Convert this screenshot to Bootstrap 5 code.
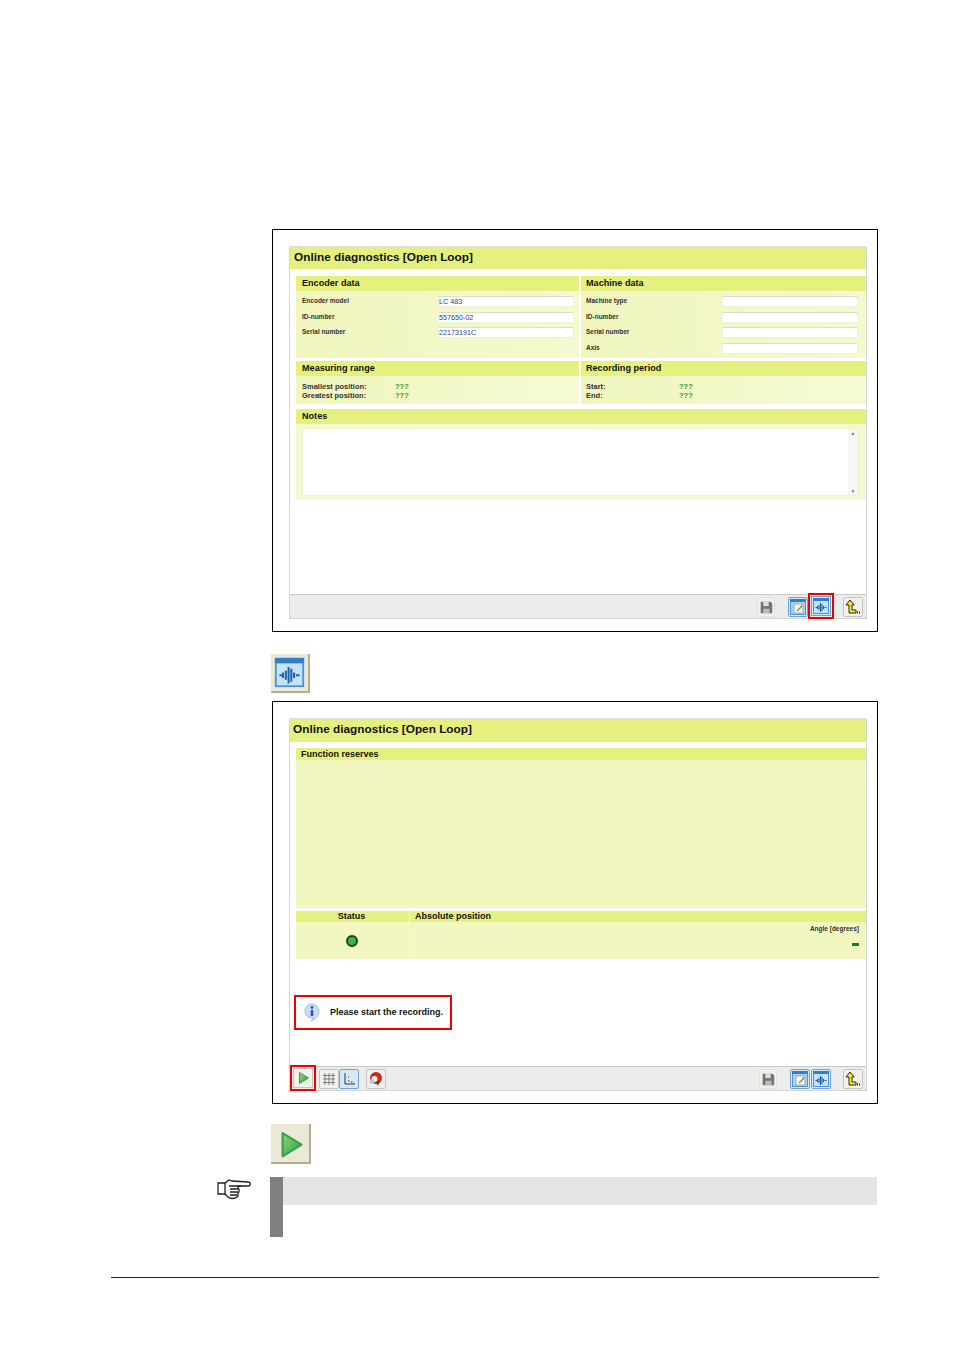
<!DOCTYPE html>
<html lang="en">
<head>
  <meta charset="UTF-8">
  <meta name="viewport" content="width=device-width, initial-scale=1.0">
  <title>Online diagnostics</title>
  <link href="https://cdn.jsdelivr.net/npm/bootstrap@5.3.3/dist/css/bootstrap.min.css" rel="stylesheet">
  <style>
    body { background: #fff; font-family: "Liberation Sans", Arial, sans-serif; color: #111; }
    .svg-defs { position: absolute; width: 0; height: 0; }
    .manual-page { width: 954px; height: 1350px; padding-top: 229px; overflow: hidden; }
    .shot-frame { width: 606px; height: 403px; margin-left: 272px; border: 1px solid #000; padding: 16px 10px 12px 16px; }
    .shot-frame-2 { margin-top: 8px; }
    .shot-window { height: 100%; border: 1px solid #d4d4d4; border-top-color: #dcdcdc; background: #fff; }
    .shot-title { height: 22px; margin: 0 0 7px; padding-left: 4px; background: #e5f07f; font-size: 11.8px; font-weight: 700; line-height: 21px; }
    .shot-frame-2 .shot-title { padding-left: 3px; margin-bottom: 6px; height: 23px; }
    .shot-sections { padding: 0 0 0 6px; }
    .sec-head { background: #e5f07f; font-size: 9.1px; font-weight: 700; padding-left: 6px; line-height: 15px; height: 15px; }
    .sec-body { background: #f1f7bf; }
    .col-left { width: 283px; margin-right: 2px; }
    .col-right { width: 285px; }
    .col-right .sec-head, .col-right .field-row, .col-right .range-row { padding-left: 5px; }
    .body-fields { height: 67px; padding-top: 2px; background: linear-gradient(90deg, #f0f6bd, #f4f9cf); }
    .body-range { height: 28px; padding-top: 6px; background: linear-gradient(90deg, #f0f6bd, #f5fad4); }
    .body-notes { height: 76px; padding: 4px 7px 0 6px; background: #f5f9d2; }
    .gap-range { margin-top: 3px; }
    .gap-notes { margin-top: 5px; }
    .field-row { height: 15.7px; font-size: 6.5px; font-weight: 700; color: #333; padding-left: 6px; line-height: 16px; }
    .field-name { width: 136px; }
    .field-box { width: 136px; height: 11px; margin-top: 3px; background: #fff; border: 1px solid #eef0e0; border-top-color: #dcdcd0; font-size: 7.2px; font-weight: 400; line-height: 9px; color: #2a3f8f; }
    .range-row { font-size: 7.5px; font-weight: 700; line-height: 9px; color: #333; padding-left: 6px; }
    .range-row .field-name { width: 93px; }
    .range-val { color: #2a9a2a; }
    .notes-box { height: 68px; background: #fff; border: 1px solid #eef2c8; position: relative; }
    .scroll-track { position: absolute; right: 0; top: 0; bottom: 0; width: 10px; background: #f6f6f6; color: #777; font-size: 5px; line-height: 8px; text-align: center; }
    .shot-toolbar { height: 24px; border-top: 1px solid #c8c8c8; background: #ececea; padding: 2px 3px 0 3px; }
    .tool-btn { width: 20px; height: 20px; border: 1px solid #c4c4c4; border-radius: 2px; background: #f2f0ea; position: relative; display: block; }
    .tool-btn svg { display: block; width: 18px; height: 18px; }
    .tool-btn.is-blue { background: #d4e8f8; border-color: #6fa3cc; }
    .tool-save { width: 18px; border-color: #e0e0e0; margin-right: 13px; }
    .tool-save svg { width: 16px; }
    .gap-3px { margin-right: 3px; }
    .gap-1px { margin-right: 1px; }
    .gap-6px { margin-right: 6px; }
    .gap-7px { margin-right: 7px; }
    .gap-12px { margin-right: 12px; }
    .red-mark { outline: 2px solid #ee0000; outline-offset: 1px; border-radius: 0; margin-top: -1px; z-index: 1; }
    .big-icon { display: block; margin-left: 271px; border-right: 2px solid #b5ad93; border-bottom: 2px solid #b5ad93; background: #ece8d8; }
    .big-icon-wave { margin-top: 22px; }
    .big-icon-play { margin-top: 20px; }
    .head-reserves { height: 12px; line-height: 12px; font-size: 9px; padding-left: 5px; }
    .body-reserves { height: 148px; }
    .gap-status { margin-top: 3px; }
    .col-status { width: 113px; margin-right: 1px; }
    .col-position { width: 456px; }
    .head-status { height: 11px; line-height: 11px; padding: 0 2px 0 0; font-size: 9px; }
    .head-position { height: 11px; line-height: 11px; font-size: 9px; padding-left: 5px; }
    .body-status { height: 37px; margin-right: -1px; padding: 13px 2px 0 0; border-right: 1px solid #f6fad6; }
    .body-position { height: 37px; padding: 2px 7px 0 0; font-size: 6.5px; font-weight: 700; line-height: 9px; color: #333; }
    .msg-box { width: 158px; height: 35px; margin: 36px 0 0 -2px; border: 2px solid #ee0000; font-size: 9px; font-weight: 700; padding-left: 7px; gap: 9px; }
    .status-led { width: 12px; height: 12px; border-radius: 50%; background: #45b045; border: 2.5px solid #0e4a20; }
    .angle-dash { width: 7px; height: 3px; background: #157a2a; margin: 10px 0 0 auto; }
    .note-row { height: 60px; margin-top: 13px; }
    .hand-icon { width: 34px; height: 24px; margin: 1px 19px 0 217px; }
    .note-bar { width: 13px; background: #808080; }
    .note-head { width: 594px; height: 28px; background: #e4e4e4; }
    .foot-rule { width: 768px; height: 1px; margin: 40px 0 0 111px; background: #222; }
  </style>
</head>
<body>
  <svg class="svg-defs">
    <defs>
      <linearGradient id="green-fill" x1="0" y1="0" x2="1" y2="1">
        <stop offset="0" stop-color="#8bd97a"/>
        <stop offset="1" stop-color="#2e9e3e"/>
      </linearGradient>
    </defs>
    <symbol id="ic-save" viewBox="0 0 18 18">
      <path d="M3 3h11l2 2v11H3z" fill="#747474"/>
      <rect x="6" y="3" width="6" height="5" fill="#dedede"/>
      <rect x="6" y="11" width="7" height="5" fill="#bdbdbd"/>
    </symbol>
    <symbol id="ic-notes" viewBox="0 0 18 18">
      <rect x="1.500" y="1.500" width="15" height="15" fill="#a9d3f2" stroke="#4a94d4"/>
      <rect x="1" y="1" width="16" height="3" fill="#2f80c8"/>
      <rect x="5" y="6" width="9" height="9" fill="#f6f6ee" stroke="#888" stroke-width=".6"/>
      <path d="M8 13l4-4" stroke="#6aa84f" stroke-width="1.400"/>
      <path d="M12 9l1-1.500" stroke="#d04040" stroke-width="1.400"/>
    </symbol>
    <symbol id="ic-wave" viewBox="0 0 18 18">
      <rect x="1.500" y="1.500" width="15" height="15" fill="#c4e2f8" stroke="#4a94d4"/>
      <rect x="1" y="1" width="16" height="3" fill="#2f80c8"/>
      <path d="M3.500 10.500h2M5.500 9v3M7 8v5M8.500 6v9M10 7v7M11.500 9v3M12.500 10.500h2" fill="none" stroke="#1a62b0" stroke-width="1.100"/>
    </symbol>
    <symbol id="ic-back" viewBox="0 0 18 18">
      <path d="M6 2l4 5H8v5h4v3H5V7H2z" fill="#f4ee20" stroke="#222" stroke-width="1"/>
      <path d="M13 14.500h1M15 14.500h1" stroke="#222" stroke-width="1.800"/>
    </symbol>
    <symbol id="ic-play" viewBox="0 0 18 18">
      <path d="M5.500 3.500l9 5.500-9 5.500z" fill="url(#green-fill)" stroke="#3a9c50" stroke-width="1" stroke-linejoin="round"/>
    </symbol>
    <symbol id="ic-grid" viewBox="0 0 18 18">
      <path d="M5 3v12M9 3v12M13 3v12M3 5.500h12M3 9h12M3 12.500h12" stroke="#666" stroke-width=".8"/>
    </symbol>
    <symbol id="ic-axis" viewBox="0 0 18 18">
      <path d="M5 3v11h10" fill="none" stroke="#333" stroke-width="1"/>
      <path d="M8 11h1.500M11 12h1.500M8 7h1" stroke="#333" stroke-width="1"/>
    </symbol>
    <symbol id="ic-magnet" viewBox="0 0 18 18">
      <circle cx="9" cy="8" r="6" fill="#d42818"/>
      <circle cx="7.500" cy="9" r="3" fill="#f4f0e8"/>
      <path d="M9 12l2 4 2-6z" fill="#7a2a18"/>
      <circle cx="5" cy="11.500" r="2.500" fill="#a8d0ea"/>
    </symbol>
  </svg>

  <div class="manual-page">
    <!-- first screenshot: overview tab -->
    <div class="shot-frame">
      <div class="shot-window d-flex flex-column">
        <div class="shot-title">Online diagnostics [Open Loop]</div>
        <div class="shot-sections flex-grow-1">
          <div class="d-flex">
            <div class="col-left">
              <div class="sec-head">Encoder data</div>
              <div class="body-fields">
                <div class="field-row d-flex"><div class="field-name">Encoder model</div><div class="field-box">LC 483</div></div>
                <div class="field-row d-flex"><div class="field-name">ID-number</div><div class="field-box">557650-02</div></div>
                <div class="field-row d-flex"><div class="field-name">Serial number</div><div class="field-box">22173191C</div></div>
              </div>
            </div>
            <div class="col-right">
              <div class="sec-head">Machine data</div>
              <div class="body-fields">
                <div class="field-row d-flex"><div class="field-name">Machine type</div><div class="field-box"></div></div>
                <div class="field-row d-flex"><div class="field-name">ID-number</div><div class="field-box"></div></div>
                <div class="field-row d-flex"><div class="field-name">Serial number</div><div class="field-box"></div></div>
                <div class="field-row d-flex"><div class="field-name">Axis</div><div class="field-box"></div></div>
              </div>
            </div>
          </div>
          <div class="d-flex gap-range">
            <div class="col-left">
              <div class="sec-head">Measuring range</div>
              <div class="body-range">
                <div class="range-row d-flex"><div class="field-name">Smallest position:</div><div class="range-val">???</div></div>
                <div class="range-row d-flex"><div class="field-name">Greatest position:</div><div class="range-val">???</div></div>
              </div>
            </div>
            <div class="col-right">
              <div class="sec-head">Recording period</div>
              <div class="body-range">
                <div class="range-row d-flex"><div class="field-name">Start:</div><div class="range-val">???</div></div>
                <div class="range-row d-flex"><div class="field-name">End:</div><div class="range-val">???</div></div>
              </div>
            </div>
          </div>
          <div class="gap-notes">
            <div class="sec-head">Notes</div>
            <div class="body-notes">
              <div class="notes-box"><div class="scroll-track d-flex flex-column justify-content-between"><span>▲</span><span>▼</span></div></div>
            </div>
          </div>
        </div>
        <div class="shot-toolbar d-flex justify-content-end">
          <div class="tool-btn tool-save"><svg><use href="#ic-save"/></svg></div>
          <div class="tool-btn is-blue gap-3px"><svg><use href="#ic-notes"/></svg></div>
          <div class="tool-btn is-blue red-mark gap-12px"><svg><use href="#ic-wave"/></svg></div>
          <div class="tool-btn"><svg><use href="#ic-back"/></svg></div>
        </div>
      </div>
    </div>

    <svg class="big-icon big-icon-wave" width="39" height="39" viewBox="0 0 18 18"><use href="#ic-wave" x="1" y="1" width="16" height="16"/></svg>

    <!-- second screenshot: function reserves tab -->
    <div class="shot-frame shot-frame-2">
      <div class="shot-window d-flex flex-column">
        <div class="shot-title">Online diagnostics [Open Loop]</div>
        <div class="shot-sections flex-grow-1">
          <div class="sec-head head-reserves">Function reserves</div>
          <div class="sec-body body-reserves"></div>
          <div class="d-flex gap-status">
            <div class="col-status">
              <div class="sec-head head-status text-center">Status</div>
              <div class="sec-body body-status d-flex justify-content-center"><div class="status-led"></div></div>
            </div>
            <div class="col-position">
              <div class="sec-head head-position">Absolute position</div>
              <div class="sec-body body-position text-end">Angle [degrees]<div class="angle-dash"></div></div>
            </div>
          </div>
          <div class="msg-box d-flex align-items-center">
            <svg width="18" height="19" viewBox="0 0 18 19"><path d="M8 1a7.500 7.500 0 0 1 8 7.500c0 4-3 7.500-8 9.500 2-1.500 2.500-2.500 2-3A7 7 0 0 1 8 1z" fill="#c9def5" stroke="#8fb0dc" stroke-width=".8"/><circle cx="9" cy="4.500" r="1.400" fill="#2f4fb0"/><rect x="7.700" y="7" width="2.600" height="6" fill="#2f4fb0"/></svg>
            <span>Please start the recording.</span>
          </div>
        </div>
        <div class="shot-toolbar d-flex">
          <div class="tool-btn red-mark gap-6px"><svg><use href="#ic-play"/></svg></div>
          <div class="tool-btn"><svg><use href="#ic-grid"/></svg></div>
          <div class="tool-btn is-blue gap-7px"><svg><use href="#ic-axis"/></svg></div>
          <div class="tool-btn me-auto"><svg><use href="#ic-magnet"/></svg></div>
          <div class="tool-btn tool-save"><svg><use href="#ic-save"/></svg></div>
          <div class="tool-btn is-blue gap-1px"><svg><use href="#ic-notes"/></svg></div>
          <div class="tool-btn is-blue gap-12px"><svg><use href="#ic-wave"/></svg></div>
          <div class="tool-btn"><svg><use href="#ic-back"/></svg></div>
        </div>
      </div>
    </div>

    <svg class="big-icon big-icon-play" width="40" height="40" viewBox="0 0 18 18"><use href="#ic-play" y=".8"/></svg>

    <!-- note block -->
    <div class="note-row d-flex">
      <svg class="hand-icon" viewBox="0 0 34 24" fill="#fff" stroke="#222" stroke-width="1.300">
        <path d="M1 5h7l4-3 3 1 16 1c3 0 3 4 0 4H21v2l1 1v3l-1 1v3l-1 1c-2 2-7 2-9 0l-3-3H1z"/>
        <path d="M8 5v12M12 8h12M13 11h8M13 14h8M13 17h7" fill="none"/>
      </svg>
      <div class="note-bar"></div>
      <div class="note-head"></div>
    </div>

    <div class="foot-rule"></div>
  </div>

  <script src="https://cdn.jsdelivr.net/npm/bootstrap@5.3.3/dist/js/bootstrap.bundle.min.js"></script>
</body>
</html>
